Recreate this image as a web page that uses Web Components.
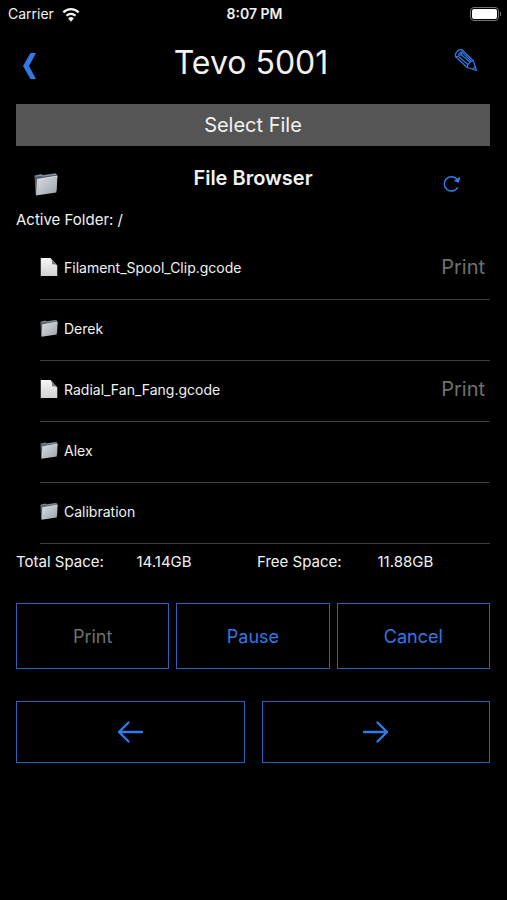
<!DOCTYPE html>
<html lang="en">
<head>
<meta charset="utf-8">
<meta name="viewport" content="width=device-width, initial-scale=1">
<title>Tevo 5001</title>
<style>
    body {
        margin: 0;
        min-height: 100vh;
        background: #000;
        color: #f2f2f2;
        font-family: Inter, "Liberation Sans", sans-serif;
        --accent: #3478e5;
        --accent-line: #2a62b8;
        --muted: #707070;
    }

    main {
        padding: 0 17px 0 16px;
    }

    .actions,
    .steps {
        display: grid;
        grid-template-columns: repeat(3, 1fr);
        gap: 7px;
        margin-top: 31px;
    }

    .steps {
        grid-template-columns: repeat(2, 1fr);
        gap: 17px;
        margin-top: 32px;
    }
</style>
</head>
<body>
<status-bar carrier="Carrier" time="8:07 PM"></status-bar>
<main>
    <printer-header>Tevo 5001</printer-header>
    <section-bar>Select File</section-bar>
    <file-browser folder="/">
        <span slot="title">File Browser</span>
        <file-row type="file" printable>Filament_Spool_Clip.gcode</file-row>
        <file-row type="folder">Derek</file-row>
        <file-row type="file" printable>Radial_Fan_Fang.gcode</file-row>
        <file-row type="folder">Alex</file-row>
        <file-row type="folder">Calibration</file-row>
    </file-browser>
    <disk-space total="14.14GB" free="11.88GB"></disk-space>
    <div class="actions">
        <outline-button disabled>Print</outline-button>
        <outline-button>Pause</outline-button>
        <outline-button>Cancel</outline-button>
    </div>
    <div class="steps">
        <outline-button compact label="Previous"><glyph-icon name="left" size="28"></glyph-icon></outline-button>
        <outline-button compact label="Next"><glyph-icon name="right" size="28"></glyph-icon></outline-button>
    </div>
</main>

<script>
const ICONS = {
    wifi: `<g fill="none" stroke="#f2f2f2" stroke-width="2.6">
            <path d="M1.5 7.2a12 12 0 0 1 17 0"/>
            <path d="M5 11a7 7 0 0 1 10 0"/>
        </g>
        <path d="M10 17.5 6.8 14a4.6 4.6 0 0 1 6.4 0z" fill="#f2f2f2"/>`,
    back: `<path d="M10.5 1H16L9 14l7 13h-5.500L3 14z" fill="currentColor"/>`,
    pencil: `<g fill="none" stroke="currentColor" stroke-width="1.2" stroke-linejoin="round">
            <path d="M1.5 8.5C.5 5 4.5.8 8 1.8L19.5 13l3 9.500-9.500-3z"/>
            <path d="M1.5 8.5C4.5 9.500 9.500 5.500 8 1.800M4 6.800 7 3.800"/>
            <path d="M13 19.500c.3-3.200 3.200-6.300 6.500-6.500M5 9l9.500 8M7 6.500l9.500 8M8.500 4.500l9 9M19 21l2-2"/>
        </g>`,
    refresh: `<path d="M17.2 14.5A7.8 7.8 0 1 1 16.5 6" fill="none" stroke="currentColor" stroke-width="1.7"/>
        <path d="M12.8 7.5 20 2.8l-1.500 6.700z" fill="currentColor"/>`,
    left: `<path d="M26 14H3M12.5 4.5 3 14l9.500 9.500" fill="none" stroke="currentColor" stroke-width="2.4" stroke-linecap="round" stroke-linejoin="round"/>`,
    right: `<path d="M2 14h23M15.5 4.5 25 14l-9.500 9.500" fill="none" stroke="currentColor" stroke-width="2.4" stroke-linecap="round" stroke-linejoin="round"/>`,
    folder: `<defs>
            <linearGradient id="front" x1="0" y1="0" x2="1" y2="1">
                <stop offset="0" stop-color="#d9dee2"/>
                <stop offset="1" stop-color="#9da3a9"/>
            </linearGradient>
        </defs>
        <path d="M.5 3.5 7 2l2 1L22 1l1 2v15L1.500 22.500z" fill="#56616b"/>
        <path d="M1.500 4.200 7 3l2 1 13-1.800" fill="none" stroke="#9eabb5" stroke-width=".8"/>
        <path d="M3 7.500 23.500 4l-1.200 16.500L2 23.500z" fill="url(#front)"/>
        <path d="M3 7.500 23.500 4" stroke="#eef2f5" stroke-width=".8"/>`,
    file: `<defs>
            <linearGradient id="sheet" x1="0" y1="0" x2="0" y2="1">
                <stop offset="0" stop-color="#f6f6f6"/>
                <stop offset="1" stop-color="#d2d2d2"/>
            </linearGradient>
        </defs>
        <path d="M1 0h13l9 10v14H1z" fill="url(#sheet)"/>
        <path d="m14 0 9 10c-2-1.5-4.5-2-7-1.5C16.5 5.5 16 2.500 14 0z" fill="#777"/>`
};

const BOXES = {
    wifi: '0 0 20 18',
    left: '0 0 28 28',
    right: '0 0 28 28',
    back: '0 0 24 28'
};

class GlyphIcon extends HTMLElement {
    constructor() {
        super();
        this.attachShadow({mode: 'open'});
    }

    connectedCallback() {
        const name = this.getAttribute('name');
        const size = this.getAttribute('size') || 24;

        this.shadowRoot.innerHTML = `
            <style>
                :host {
                    display: block;
                    width: ${size}px;
                    height: ${size}px;
                }

                svg {
                    display: block;
                    width: 100%;
                    height: 100%;
                }
            </style>
            <svg viewBox="${BOXES[name] || '0 0 24 24'}" aria-hidden="true">${ICONS[name]}</svg>
        `;
    }
}

class StatusBar extends HTMLElement {
    constructor() {
        super();
        this.attachShadow({mode: 'open'});
    }

    connectedCallback() {
        this.shadowRoot.innerHTML = `
            <style>
                :host {
                    display: grid;
                    grid-template-columns: 1fr auto 1fr;
                    align-items: center;
                    height: 27px;
                    padding: 0 6px 0 8px;
                    font-size: 14px;
                }

                .carrier {
                    display: flex;
                    align-items: center;
                    gap: 8px;
                }

                .time {
                    font-weight: 600;
                }

                .battery {
                    display: flex;
                    justify-self: end;
                    align-items: center;
                    gap: 1px;
                }

                .cell {
                    box-sizing: border-box;
                    width: 29px;
                    height: 14px;
                    padding: 1px;
                    border: 1px solid #777;
                    border-radius: 4px;
                }

                .cell::before {
                    content: "";
                    display: block;
                    height: 100%;
                    border-radius: 2px;
                    background: #fff;
                }

                .tip {
                    width: 1px;
                    height: 4px;
                    background: #777;
                }
            </style>
            <span class="carrier">${this.getAttribute('carrier')}<glyph-icon name="wifi" size="18"></glyph-icon></span>
            <span class="time">${this.getAttribute('time')}</span>
            <span class="battery"><span class="cell"></span><span class="tip"></span></span>
        `;
    }
}

class PrinterHeader extends HTMLElement {
    constructor() {
        super();
        this.attachShadow({mode: 'open'});
        this.shadowRoot.innerHTML = `
            <style>
                :host {
                    display: grid;
                    grid-template-columns: 32px 1fr 36px;
                    align-items: center;
                    height: 77px;
                }

                h1 {
                    margin: 0;
                    padding-bottom: 6px;
                    font-size: 32px;
                    line-height: 40px;
                    font-weight: 400;
                    text-align: center;
                }

                button {
                    display: flex;
                    justify-content: center;
                    padding: 0;
                    border: 0;
                    background: none;
                    color: var(--accent);
                }

                .edit {
                    justify-self: start;
                    padding-bottom: 12px;
                }
            </style>
            <button aria-label="Back"><glyph-icon name="back" size="28"></glyph-icon></button>
            <h1><slot></slot></h1>
            <button class="edit" aria-label="Edit"><glyph-icon name="pencil" size="24"></glyph-icon></button>
        `;
    }
}

class SectionBar extends HTMLElement {
    constructor() {
        super();
        this.attachShadow({mode: 'open'});
        this.shadowRoot.innerHTML = `
            <style>
                :host {
                    display: block;
                    background: #555;
                    font-size: 20px;
                    line-height: 42px;
                    text-align: center;
                }
            </style>
            <slot></slot>
        `;
    }
}

class FileBrowser extends HTMLElement {
    constructor() {
        super();
        this.attachShadow({mode: 'open'});
    }

    connectedCallback() {
        this.shadowRoot.innerHTML = `
            <style>
                :host {
                    display: block;
                }

                header {
                    display: grid;
                    grid-template-columns: 60px 1fr 60px;
                    grid-template-rows: 32px;
                    align-items: end;
                    justify-items: center;
                    padding-top: 18px;
                }

                h2 {
                    align-self: start;
                    margin: 0;
                    font-size: 20px;
                    line-height: 28px;
                    font-weight: 600;
                }

                button {
                    padding: 0;
                    border: 0;
                    background: none;
                    color: var(--accent);
                }

                .refresh {
                    justify-self: start;
                    padding-left: 12px;
                }

                p {
                    margin: 0;
                    padding-top: 14px;
                    font-size: 15px;
                    line-height: 20px;
                }

                .files {
                    padding: 9px 0 0 24px;
                }
            </style>
            <header>
                <button aria-label="Parent folder"><glyph-icon name="folder" size="24"></glyph-icon></button>
                <h2><slot name="title"></slot></h2>
                <button class="refresh" aria-label="Refresh"><glyph-icon name="refresh" size="22"></glyph-icon></button>
            </header>
            <p>Active Folder: ${this.getAttribute('folder')}</p>
            <div class="files" role="list"><slot></slot></div>
        `;
    }
}

class FileRow extends HTMLElement {
    constructor() {
        super();
        this.attachShadow({mode: 'open'});
    }

    connectedCallback() {
        this.setAttribute('role', 'listitem');
        this.shadowRoot.innerHTML = `
            <style>
                :host {
                    display: flex;
                    align-items: center;
                    gap: 6px;
                    height: 56px;
                    padding: 0 5px 4px 0;
                    border-bottom: 1px solid #3c3c3c;
                    font-size: 14px;
                }

                .name {
                    flex: 1;
                }

                button {
                    padding: 0;
                    border: 0;
                    background: none;
                    font: inherit;
                    font-size: 20px;
                    color: var(--muted);
                }
            </style>
            <glyph-icon name="${this.getAttribute('type')}" size="18"></glyph-icon>
            <span class="name"><slot></slot></span>
            ${this.hasAttribute('printable') ? '<button disabled>Print</button>' : ''}
        `;
    }
}

class DiskSpace extends HTMLElement {
    constructor() {
        super();
        this.attachShadow({mode: 'open'});
    }

    connectedCallback() {
        this.shadowRoot.innerHTML = `
            <style>
                :host {
                    display: grid;
                    grid-template-columns: repeat(4, 1fr);
                    gap: 8px;
                    padding-top: 8px;
                    font-size: 15px;
                    line-height: 20px;
                }
            </style>
            <span>Total Space:</span>
            <span>${this.getAttribute('total')}</span>
            <span>Free Space:</span>
            <span>${this.getAttribute('free')}</span>
        `;
    }
}

class OutlineButton extends HTMLElement {
    constructor() {
        super();
        this.attachShadow({mode: 'open'});
    }

    connectedCallback() {
        this.shadowRoot.innerHTML = `
            <style>
                :host {
                    display: block;
                }

                button {
                    display: flex;
                    align-items: center;
                    justify-content: center;
                    width: 100%;
                    height: 66px;
                    padding: 0;
                    border: 1px solid var(--accent-line);
                    background: none;
                    font: inherit;
                    font-size: 18px;
                    color: var(--accent);
                }

                button:disabled {
                    color: var(--muted);
                }

                :host([compact]) button {
                    height: 62px;
                }
            </style>
            <button><slot></slot></button>
        `;

        const button = this.shadowRoot.querySelector('button');
        button.disabled = this.hasAttribute('disabled');

        if (this.hasAttribute('label')) {
            button.setAttribute('aria-label', this.getAttribute('label'));
        }
    }
}

customElements.define('glyph-icon', GlyphIcon);
customElements.define('status-bar', StatusBar);
customElements.define('printer-header', PrinterHeader);
customElements.define('section-bar', SectionBar);
customElements.define('file-browser', FileBrowser);
customElements.define('file-row', FileRow);
customElements.define('disk-space', DiskSpace);
customElements.define('outline-button', OutlineButton);
</script>
</body>
</html>
